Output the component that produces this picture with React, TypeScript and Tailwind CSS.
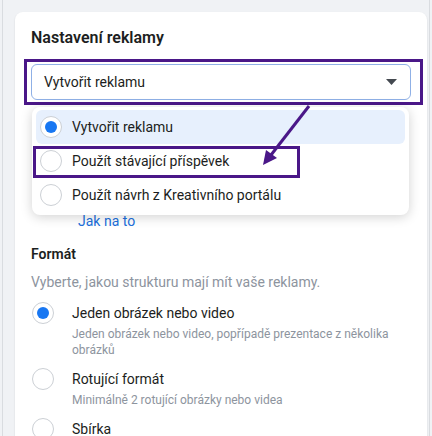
import React from "react";

const PURPLE = "border-[#4a1788]";

function Radio({ checked = false }: { checked?: boolean }) {
  return (
    <div className="w-[22px] h-[22px] shrink-0 rounded-full border border-[#ccd0d5] bg-white flex items-center justify-center">
      {checked && <div className="w-[12px] h-[12px] rounded-full bg-[#1877f2]" />}
    </div>
  );
}

const menuItems = [
  { label: "Vytvořit reklamu", checked: true },
  { label: "Použít stávající příspěvek", checked: false },
  { label: "Použít návrh z Kreativního portálu", checked: false },
];

const formats = [
  {
    title: "Jeden obrázek nebo video",
    desc: ["Jeden obrázek nebo video, popřípadě prezentace z několika", "obrázků"],
    checked: true,
  },
  { title: "Rotující formát", desc: ["Minimálně 2 rotující obrázky nebo videa"], checked: false },
  { title: "Sbírka", desc: [], checked: false },
];

export default function App() {
  return (
    <div
      className="relative w-[432px] h-[436px] overflow-hidden bg-[#f0f2f5] pl-[2px] pr-[2px]"
      style={{ fontFamily: "Roboto, 'Liberation Sans', sans-serif" }}
    >
      <div className="h-full border-x border-[#d9dce0] pl-3 pr-[2px] pt-3">
        <div className="h-[440px] bg-white rounded-lg shadow-[0_1px_2px_rgba(0,0,0,0.12)] px-4 pt-4">
          <h2 className="text-[16px] leading-5 font-semibold text-[#1c1e21]">Nastavení reklamy</h2>

          {/* select with annotation */}
          <div className="relative mt-[11px]">
            <div className={`-ml-[7px] w-[399px] border-[3px] ${PURPLE} pt-[2px] pb-[2px] pl-[4px] pr-[9px]`}>
              <div className="h-[36px] rounded-md border border-[#8fb0e6] bg-white flex items-center justify-between pl-[12px] pr-[13px]">
                <span className="text-[14px] text-[#1c1e21]">Vytvořit reklamu</span>
                <svg width="11" height="6" viewBox="0 0 11 6">
                  <path d="M0 0 H11 L5.5 6 Z" fill="#444950" />
                </svg>
              </div>
            </div>

            {/* dropdown menu */}
            <div className="absolute left-[1px] top-[48px] w-[377px] z-10 rounded-lg bg-white shadow-[0_2px_12px_rgba(0,0,0,0.18)] pt-[3px] pb-[3px]">
              {menuItems.map((item) => (
                <div
                  key={item.label}
                  className={`mx-1 h-[34px] rounded-md flex items-center pl-1 ${item.checked ? "bg-[#e7f0fd]" : ""}`}
                >
                  <Radio checked={item.checked} />
                  <span className="ml-[10px] text-[14px] text-[#1c1e21]">{item.label}</span>
                </div>
              ))}
              <div className={`absolute left-[1px] top-[39px] w-[267px] h-[32px] border-[3px] ${PURPLE}`} />
            </div>
          </div>

          <a className="block mt-[106px] pl-[47px] text-[14px] leading-5 text-[#216fdb]">Jak na to</a>

          <h3 className="mt-[13px] text-[14px] leading-5 font-semibold text-[#1c1e21]">Formát</h3>
          <p className="mt-[8px] text-[14px] leading-5 text-[#8d949e]">Vyberte, jakou strukturu mají mít vaše reklamy.</p>

          <div className="mt-[11px] flex flex-col gap-[11px]">
            {formats.map((f) => (
              <div key={f.title} className="flex">
                <div className="ml-[1px] -mt-[1px]">
                  <Radio checked={f.checked} />
                </div>
                <div className="ml-[18px]">
                  <div className="text-[14px] leading-5 text-[#1c1e21]">{f.title}</div>
                  {f.desc.length > 0 && (
                    <div className="mt-[3px] text-[12px] leading-4 text-[#8d949e]">
                      {f.desc.map((d) => (
                        <div key={d}>{d}</div>
                      ))}
                    </div>
                  )}
                </div>
              </div>
            ))}
          </div>
        </div>
      </div>

      {/* annotation arrow */}
      <svg className="absolute inset-0 z-20 pointer-events-none" width="432" height="436">
        <line x1="309" y1="106" x2="271" y2="155" stroke="#4a1788" strokeWidth="3" />
        <polygon points="263,165 277,158 266,150" fill="#4a1788" />
      </svg>
    </div>
  );
}
